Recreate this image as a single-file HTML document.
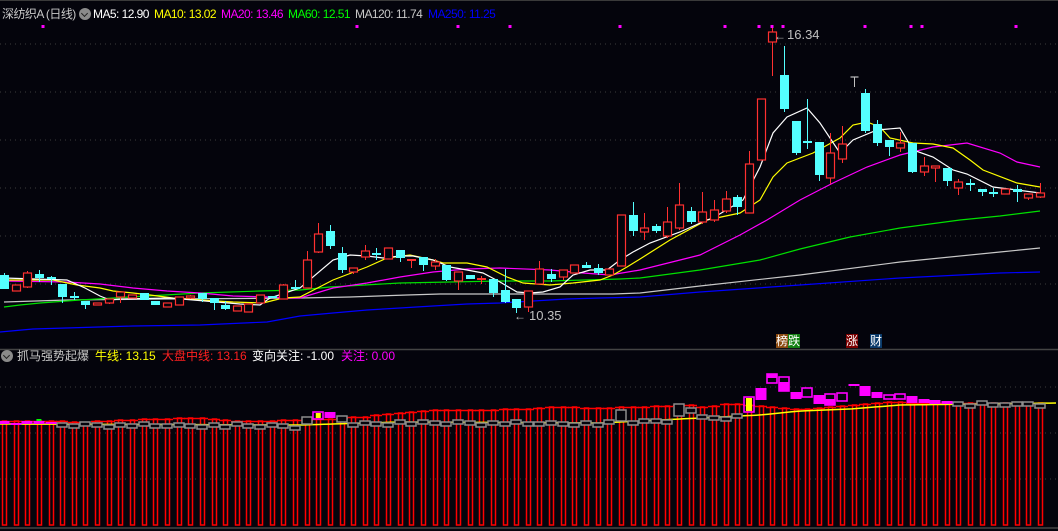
<!DOCTYPE html>
<html><head><meta charset="utf-8">
<style>
html,body{margin:0;padding:0;background:#04040c;width:1058px;height:531px;overflow:hidden}
body{position:relative;font-family:"Liberation Sans","Noto Sans CJK SC",sans-serif}
.hd{position:absolute;font-size:12px;white-space:nowrap;line-height:16px}
.t .hd{letter-spacing:-0.55px}
.ic{display:inline-block;width:12px;height:12px;border-radius:50%;background:#8a8a8a;vertical-align:-2px;position:relative}
.ic:after{content:"";position:absolute;left:3px;top:2.5px;width:4px;height:4px;border-right:1.5px solid #222;border-bottom:1.5px solid #222;transform:rotate(45deg)}
svg{position:absolute;left:0;top:0}
.tag{position:absolute;top:334px;height:14px;font-size:12px;line-height:14px;color:#fff;text-align:center;width:12px}
</style></head><body>
<svg id="s" width="1058" height="531" xmlns="http://www.w3.org/2000/svg"></svg>
<div class="t">
<div class="hd" style="left:2px;top:6px;color:#c8c8c8">深纺织A (日线)</div>
<div class="hd" style="left:79px;top:6px"><span class="ic"></span></div>
<div class="hd" style="left:93px;top:6px;color:#fff">MA5: 12.90</div>
<div class="hd" style="left:154px;top:6px;color:#ffff00">MA10: 13.02</div>
<div class="hd" style="left:221px;top:6px;color:#ff00ff">MA20: 13.46</div>
<div class="hd" style="left:288px;top:6px;color:#00ff00">MA60: 12.51</div>
<div class="hd" style="left:355px;top:6px;color:#c8c8c8">MA120: 11.74</div>
<div class="hd" style="left:428px;top:6px;color:#0000ff">MA250: 11.25</div>
</div>
<div class="hd" style="left:1px;top:348px"><span class="ic"></span></div>
<div class="hd" style="left:17px;top:348px;color:#c8c8c8">抓马强势起爆</div>
<div class="hd" style="left:95px;top:348px;color:#ffff00">牛线: 13.15</div>
<div class="hd" style="left:162px;top:348px;color:#ff2020">大盘中线: 13.16</div>
<div class="hd" style="left:252px;top:348px;color:#fff">变向关注: -1.00</div>
<div class="hd" style="left:341px;top:348px;color:#ff00ff">关注: 0.00</div>
<div class="tag" style="left:776px;background:#8b4a10">榜</div>
<div class="tag" style="left:788px;background:#138013">跌</div>
<div class="tag" style="left:846px;background:#7a0000">涨</div>
<div class="tag" style="left:870px;background:#0a3a6a">财</div>
<script>
var s=document.getElementById('s'),h='';
function L(x1,y1,x2,y2,c,w,d){h+='<line x1="'+x1+'" y1="'+y1+'" x2="'+x2+'" y2="'+y2+'" stroke="'+c+'" stroke-width="'+(w||1)+'"'+(d?' stroke-dasharray="'+d+'"':'')+'/>';}
function R(x,y,w,hh,f,st,sw){h+='<rect x="'+x+'" y="'+y+'" width="'+w+'" height="'+hh+'" fill="'+f+'"'+(st?' stroke="'+st+'" stroke-width="'+(sw||1)+'"':'')+'/>';}
function P(pts,c,w){h+='<polyline fill="none" stroke="'+c+'" stroke-width="'+(w||1)+'" points="'+pts.map(function(p){return p.join(',')}).join(' ')+'"/>';}
function interp(pts,x){for(var i=1;i<pts.length;i++){if(x<=pts[i][0]){var a=pts[i-1],b=pts[i];return a[1]+(b[1]-a[1])*(x-a[0])/(b[0]-a[0]);}}return pts[pts.length-1][1];}
L(0,0.5,1058,0.5,'#3a3a3a',1);
[44,92,140,188,236,284].forEach(function(y){L(0,y,1058,y,'#3c3c3c',1,'1,4');});
[387,433,479].forEach(function(y){L(0,y,1058,y,'#3c3c3c',1,'1,4');});
L(0,349.5,1058,349.5,'#444',1.5);L(0,528,1058,528,'#444',1.5);
P([[0,332],[33,329],[133,326],[200,325],[267,322],[300,316],[333,313],[367,310],[400,308],[433,306],[467,304],[500,303],[533,301],[567,299],[600,298],[640,297],[700,292],[800,285],[900,278],[1000,273],[1040,272]],'#0000ff',1.2);
P([[4,302],[67,300],[167,299],[300,298],[350,297],[407,295],[440,294],[613,294],[640,293],[700,286],[800,275],[900,262],[1000,252],[1040,248]],'#c8c8c8',1.2);
P([[4,307],[20,305],[40,303],[80,300],[130,297],[200,293],[260,291],[300,290],[330,287],[400,283],[500,281],[550,281],[620,279],[640,278],[700,270],[760,260],[800,249],[850,237],[900,228],[960,220],[1000,216],[1040,211]],'#00e000',1.2);
P([[4,281],[67,282],[100,284],[133,288],[167,291],[200,293],[233,296],[267,297],[290,298],[300,298],[333,288],[367,283],[400,277],[433,272],[467,269],[500,268],[550,270],[583,273],[610,275],[640,270],[700,255],[740,235],[767,220],[800,200],[833,183],[867,167],[900,155],[933,147],[967,143],[1000,153],[1017,162],[1040,167]],'#ff00ff',1.2);
P([[4,280],[53,280],[77,285],[100,288],[113,291],[133,293],[150,295],[173,298],[200,300],[233,302],[263,303],[283,298],[300,297],[333,280],[367,267],[387,258],[410,255],[433,260],[443,263],[467,263],[487,267],[507,277],[523,283],[550,285],[573,283],[600,280],[613,275],[627,267],[640,259],[670,240],[707,220],[740,213],[760,200],[773,177],[787,163],[813,153],[840,138],[853,125],[867,122],[880,127],[890,138],[913,143],[933,144],[953,148],[970,160],[983,170],[1017,183],[1040,187]],'#ffff00',1.2);
P([[4,278],[67,280],[85,288],[100,296],[110,300],[120,299],[170,298],[240,304],[260,305],[270,298],[300,288],[333,260],[350,255],[367,256],[383,258],[400,256],[413,256],[433,260],[450,267],[467,270],[483,273],[500,282],[517,292],[530,293],[543,292],[560,287],[573,275],[590,270],[607,270],[620,260],[633,252],[650,243],[680,232],[707,220],[713,218],[743,200],[760,167],[773,133],[787,117],[807,108],[820,123],[840,153],[853,140],[877,130],[900,128],[913,150],[933,157],[953,170],[967,174],[993,187],[1017,190],[1040,193]],'#ffffff',1.2);
var D=[['C',275,289,273,289],['R',285,291,285,291],['R',273,287,271,288],['C',274,278,270,282],['X',278,278,276,285],['C',284,297,284,303],['X',297,297,292,300],['C',301,305,301,309],['R',303,305,303,305],['R',299,303,299,304],['R',292,297,292,303],['R',295,298,295,298],['C',293,300,293,300],['C',301,305,301,305],['R',303,307,303,307],['R',297,305,297,305],['R',296,298,295,299],['C',293,299,293,302],['C',298,303,298,310],['C',305,309,301,310],['R',306,311,306,311],['R',304,312,304,312],['R',295,303,295,303],['C',296,298,296,298],['R',285,299,284,299],['C',287,289,280,289],['R',260,288,251,288],['R',234,252,223,253],['C',231,246,225,249],['C',253,270,247,273],['R',268,272,268,274],['R',251,257,245,260],['X',254,254,248,260],['R',248,259,248,259],['C',250,258,250,262],['RX',260,260,259,268],['C',257,265,257,271],['R',262,266,259,270],['C',265,280,265,281],['R',272,281,272,290],['C',275,279,275,279],['RX',279,279,276,284],['C',279,293,279,297],['C',290,302,269,303],['C',299,308,299,313],['R',291,307,291,312],['R',269,284,261,284],['C',274,279,269,282],['R',270,277,270,280],['R',265,273,265,273],['C',265,268,262,268],['C',268,273,264,275],['R',269,275,269,275],['R',215,266,215,266],['C',215,231,202,236],['R',228,232,213,240],['C',226,231,224,233],['R',222,236,207,238],['R',205,228,183,230],['C',211,222,207,224],['R',212,222,192,224],['R',210,220,200,222],['R',199,211,191,213],['C',197,207,195,215],['R',164,213,151,213],['R',99,160,99,160],['R',32,42,28,76],['C',75,109,46,112],['C',121,153,121,155],['C',141,143,99,149],['C',142,175,142,181],['R',153,178,133,184],['R',144,159,126,163],['T',77,77,77,87],['C',93,131,89,133],['C',124,143,120,146],['C',140,147,140,156],['R',143,148,132,152],['C',143,172,143,173],['R',166,172,157,176],['R',166,168,166,182],['C',168,181,168,186],['R',182,188,179,195],['X',184,184,179,191],['C',189,192,189,196],['X',193,193,188,197],['R',189,194,189,194],['C',189,192,185,202],['R',194,198,194,200],['R',193,197,183,198]];
function cx(i){return 4+11.64*i;}
var RED='#ff3030',CY='#54ffff';
D.forEach(function(d,i){var x=Math.round(cx(i))+0.5,t=d[0],o=d[1],c=d[2],hi=d[3],lo=d[4],top=Math.min(o,c),bot=Math.max(o,c);
 if(t=='X'||t=='RX'){var col=t=='X'?CY:RED;L(x,hi,x,lo,col,1);R(x-4.5,o-1,9,2,col);return;}
 if(t=='T'){L(x,hi,x,lo,'#c0c0c0',1);L(x-4,hi,x+4,hi,'#c0c0c0',1.2);return;}
 var col=t=='R'?RED:CY;
 L(x,hi,x,lo,col,1);
 if(t=='R')R(x-4,top,8,Math.max(bot-top,1),'#04040c',col,1.2);else R(x-4.5,top,9,Math.max(bot-top,2),col);
});
[43,357,458,510,620,725,759,772,783,865,911,922,1016].forEach(function(x){R(x-1.5,25,3,3,'#ff00ff');});
h+='<text x="774" y="40" fill="#b8b8b8" font-size="12" font-family="Liberation Sans">←</text>';
h+='<text x="787" y="39" fill="#c0c0c0" font-size="13" font-family="Liberation Sans">16.34</text>';
h+='<text x="514" y="320" fill="#b8b8b8" font-size="12" font-family="Liberation Sans">←</text>';
h+='<text x="529" y="320" fill="#c0c0c0" font-size="13" font-family="Liberation Sans">10.35</text>';
var RT=[[0,421],[60,421],[80,423],[100,421],[150,419],[190,418],[210,418],[225,420],[245,421],[300,420],[330,419],[360,417],[400,413],[430,410],[470,410],[520,409],[560,407],[600,408],[640,407],[690,405],[705,407],[730,404],[760,406],[800,409],[830,407],[850,405],[870,403],[900,402],[920,403],[1058,403]];
var YL=[[0,424],[300,425],[400,422],[600,423],[680,419],[700,418],[760,415],[800,411],[850,409],[900,405],[1058,403]];
for(var i=0;i<90;i++){var x=Math.round(cx(i)),t=Math.round(interp(RT,x));
 R(x-1.5,t,4,525-t,'none','#ff0000',1.5);
 L(x-6,t+0.5,x+6,t+0.5,'#ff0000',1.5);}
var yp=[];for(var x=0;x<=1058;x+=6)yp.push([x,interp(YL,x)]);P(yp,'#ffff00',1.5);
var MG={0:[421,424,1],1:[423,425,1],2:[421,424,1],3:[421,424,1],4:[422,424,1],27:[412,419,0],28:[412,418,1],64:[397,412,0],65:[388,400,1],66:[374,383,2],67:[377,391,3],68:[392,399,1],69:[388,397,0],70:[395,404,1],71:[394,405,3],72:[393,401,0],73:[384,386,1],74:[386,396,1],75:[392,398,1],76:[395,399,0],77:[394,399,0],78:[396,403,1],79:[399,403,1],80:[400,404,1],81:[401,404,1]};
var BIG={26:[417,424],29:[416,422],53:[410,421],58:[404,416],59:[408,413]};
var off=[0,2,-1,1,-2,0,1,-1];
for(var i=5;i<90;i++){if(MG[i])continue;var x=Math.round(cx(i)),y0,y1;
 if(BIG[i]){y0=BIG[i][0];y1=BIG[i][1];}else{var yy=interp(YL,x)+off[i%8]*0.8;y0=Math.round(yy-1);y1=y0+4;}
 R(x-5,y0,10,y1-y0,'#04040c','#8c8c8c',1.5);}
for(var k in MG){var i=+k,m=MG[k],x=Math.round(cx(i));
 if(m[2]==1)R(x-5.5,m[0],11,m[1]-m[0],'#ff00ff');
 else{R(x-5,m[0],10,m[1]-m[0],'none','#ff00ff',1.6);
  if(m[2]==2)R(x-5.5,m[0],11,4,'#ff00ff');
  if(m[2]==3)R(x-5.5,m[0]+5,11,m[1]-m[0]-5,'#ff00ff');}
}
R(cx(3)-2.5,419,5,2,'#00ff00');
R(cx(27)-2.5,413,5,5,'#ffff00');
R(cx(64)-3,398,6,13,'#ffff00');
s.innerHTML=h;
</script>
</body></html>
